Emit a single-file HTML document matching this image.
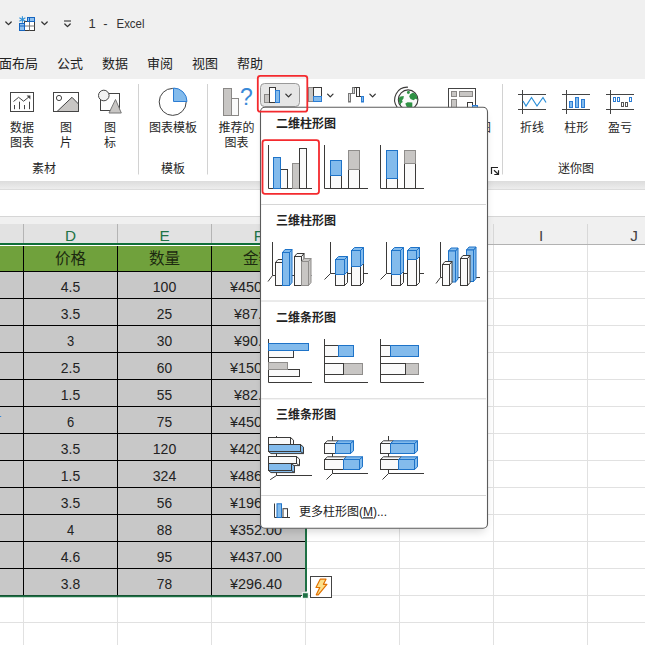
<!DOCTYPE html>
<html lang="zh-CN">
<head>
<meta charset="utf-8">
<title>1 - Excel</title>
<style>
html, body { margin: 0; padding: 0; background: #ffffff; }
body { width: 645px; height: 645px; overflow: hidden; }
svg { display: block; font-family: "Liberation Sans", "Noto Sans CJK SC", sans-serif; }
text { font-family: "Liberation Sans", "Noto Sans CJK SC", sans-serif; }
</style>
</head>
<body>
<svg width="645" height="645" viewBox="0 0 645 645" shape-rendering="auto">
<rect x="0" y="0" width="645" height="645" fill="#ffffff" stroke="none" stroke-width="1" rx="0" />
<rect x="0" y="0" width="645" height="79" fill="#f0f0f0" stroke="none" stroke-width="1" rx="0" />
<path d="M5.8 21.95 L8.5 24.650000000000002 L11.2 21.95" fill="none" stroke="#333" stroke-width="1.3" stroke-linecap="round" stroke-linejoin="round"/>
<rect x="24.5" y="21.5" width="10.0" height="9.0" fill="#ffffff" stroke="#3b3a39" stroke-width="1" rx="0" />
<line x1="29.5" y1="21.5" x2="29.5" y2="30.5" stroke="#777" stroke-width="1" />
<line x1="24.5" y1="26" x2="34.5" y2="26" stroke="#777" stroke-width="1" />
<rect x="27.5" y="17.5" width="7.0" height="4.0" fill="#8fc0ee" stroke="#1565c0" stroke-width="1" rx="0" />
<line x1="29.5" y1="17.5" x2="29.5" y2="21.5" stroke="#1565c0" stroke-width="1" />
<rect x="19.5" y="23.5" width="5.0" height="7.0" fill="#8fc0ee" stroke="#1565c0" stroke-width="1" rx="0" />
<line x1="19.5" y1="26" x2="24.5" y2="26" stroke="#1565c0" stroke-width="1" />
<line x1="19.5" y1="23" x2="19.5" y2="24" stroke="#1565c0" stroke-width="1" />
<line x1="22.4" y1="16.2" x2="22.4" y2="22.8" stroke="#2b8fd8" stroke-width="1.1" />
<line x1="19.4" y1="17.8" x2="25.4" y2="21.2" stroke="#2b8fd8" stroke-width="1.1" />
<line x1="19.4" y1="21.2" x2="25.4" y2="17.8" stroke="#2b8fd8" stroke-width="1.1" />
<path d="M41.8 21.95 L44.5 24.650000000000002 L47.2 21.95" fill="none" stroke="#333" stroke-width="1.3" stroke-linecap="round" stroke-linejoin="round"/>
<line x1="64" y1="21" x2="71" y2="21" stroke="#444" stroke-width="1.2" />
<path d="M64.8 23.95 L67.5 26.650000000000002 L70.2 23.95" fill="none" stroke="#333" stroke-width="1.3" stroke-linecap="round" stroke-linejoin="round"/>
<text x="88.5" y="28" font-size="13" text-anchor="start" fill="#333" font-weight="normal" >1</text>
<text x="105.5" y="28" font-size="13" text-anchor="middle" fill="#333" font-weight="normal" >-</text>
<text x="116.5" y="28" font-size="13" text-anchor="start" fill="#333" font-weight="normal" textLength="28" lengthAdjust="spacingAndGlyphs">Excel</text>
<text x="-1" y="67.8" font-size="13" text-anchor="start" fill="#222" font-weight="normal" >面布局</text>
<text x="70" y="67.8" font-size="13" text-anchor="middle" fill="#222" font-weight="normal" >公式</text>
<text x="115" y="67.8" font-size="13" text-anchor="middle" fill="#222" font-weight="normal" >数据</text>
<text x="160" y="67.8" font-size="13" text-anchor="middle" fill="#222" font-weight="normal" >审阅</text>
<text x="205" y="67.8" font-size="13" text-anchor="middle" fill="#222" font-weight="normal" >视图</text>
<text x="250" y="67.8" font-size="13" text-anchor="middle" fill="#222" font-weight="normal" >帮助</text>
<defs><linearGradient id="rs" x1="0" y1="0" x2="0" y2="1"><stop offset="0" stop-color="#dcdcdc"/><stop offset="1" stop-color="#efefef"/></linearGradient><linearGradient id="ps" x1="0" y1="0" x2="0" y2="1"><stop offset="0" stop-color="#000" stop-opacity="0.16"/><stop offset="1" stop-color="#000" stop-opacity="0"/></linearGradient><filter id="sh" x="-10%" y="-10%" width="120%" height="125%"><feGaussianBlur stdDeviation="5"/></filter></defs>
<rect x="0" y="79" width="645" height="102" fill="#ffffff" stroke="none" stroke-width="1" rx="0" />
<rect x="0" y="181" width="645" height="9" fill="url(#rs)" stroke="none" stroke-width="1" rx="0" />
<line x1="0" y1="189.5" x2="645" y2="189.5" stroke="#dcdcdc" stroke-width="1" />
<line x1="138.5" y1="84" x2="138.5" y2="174.5" stroke="#d2d2d2" stroke-width="1" />
<line x1="207.5" y1="84" x2="207.5" y2="174.5" stroke="#d2d2d2" stroke-width="1" />
<line x1="502.5" y1="84" x2="502.5" y2="174.5" stroke="#d2d2d2" stroke-width="1" />
<rect x="10.5" y="92.5" width="23.0" height="19.0" fill="#ffffff" stroke="#444" stroke-width="1" rx="0" />
<path d="M13.5 101.5 L18.6 97.3 L23.6 101.2 L29.3 96.6" fill="none" stroke="#444" stroke-width="1" />
<path d="M26.6 95.6 L30.4 95.6 L30.4 99.4 Z" fill="#444" stroke="none" stroke-width="1" />
<line x1="14.5" y1="105" x2="14.5" y2="109.2" stroke="#444" stroke-width="1" />
<line x1="19.5" y1="101.7" x2="19.5" y2="109.2" stroke="#444" stroke-width="1" />
<line x1="24.5" y1="105" x2="24.5" y2="109.2" stroke="#444" stroke-width="1" />
<line x1="29.5" y1="101.7" x2="29.5" y2="109.2" stroke="#444" stroke-width="1" />
<rect x="53.5" y="92.5" width="25.0" height="19.0" fill="#ffffff" stroke="#444" stroke-width="1" rx="0" />
<path d="M57 111.5 L72 97.3 L78.5 104 L78.5 111.5 Z" fill="#c8c6c4" stroke="#444" stroke-width="1" />
<circle cx="59" cy="98" r="2.6" fill="#fff" stroke="#444"/>
<rect x="100.5" y="93.5" width="19.0" height="17.0" fill="#ffffff" stroke="#444" stroke-width="1" rx="0" />
<circle cx="103.8" cy="95.5" r="5.3" fill="#f3f3f3" stroke="#444"/>
<path d="M115.5 99.5 L121.3 113 L109 113 Z" fill="#c8c6c4" stroke="#777" stroke-width="1" />
<text x="22" y="131.8" font-size="12" text-anchor="middle" fill="#262626" font-weight="normal" >数据</text>
<text x="22" y="146.8" font-size="12" text-anchor="middle" fill="#262626" font-weight="normal" >图表</text>
<text x="66" y="131.8" font-size="12" text-anchor="middle" fill="#262626" font-weight="normal" >图</text>
<text x="66" y="146.8" font-size="12" text-anchor="middle" fill="#262626" font-weight="normal" >片</text>
<text x="110" y="131.8" font-size="12" text-anchor="middle" fill="#262626" font-weight="normal" >图</text>
<text x="110" y="146.8" font-size="12" text-anchor="middle" fill="#262626" font-weight="normal" >标</text>
<text x="44" y="173" font-size="12" text-anchor="middle" fill="#262626" font-weight="normal" >素材</text>
<circle cx="172.7" cy="101.9" r="13.5" fill="#fff" stroke="#444"/>
<path d="M173.5 101.5 L173.5 88 A13.5 13.5 0 0 1 187 101.5 Z" fill="#83bbec" stroke="#2b7cd3" stroke-width="1" />
<text x="173" y="131.8" font-size="12" text-anchor="middle" fill="#262626" font-weight="normal" >图表模板</text>
<text x="173" y="173" font-size="12" text-anchor="middle" fill="#262626" font-weight="normal" >模板</text>
<rect x="223.5" y="88.5" width="8.0" height="27.0" fill="#c8c6c4" stroke="#8a8886" stroke-width="1" rx="0" />
<rect x="231.5" y="98.5" width="7.0" height="17.0" fill="#fafafa" stroke="#8a8886" stroke-width="1" rx="0" />
<text x="246.3" y="105.2" font-size="23" text-anchor="middle" fill="#3a8ad8" font-weight="normal" >?</text>
<text x="236.5" y="131.8" font-size="12" text-anchor="middle" fill="#262626" font-weight="normal" >推荐的</text>
<text x="236.5" y="146.8" font-size="12" text-anchor="middle" fill="#262626" font-weight="normal" >图表</text>
<rect x="260.5" y="83.5" width="39.0" height="23.0" fill="#e6e6e6" stroke="#9a9a9a" stroke-width="1" rx="4" />
<rect x="264.5" y="94.5" width="5.0" height="8.0" fill="#c8c6c4" stroke="#8a8886" stroke-width="1" rx="0" />
<rect x="269.5" y="87.5" width="6.0" height="15.0" fill="#fff" stroke="#3b3a39" stroke-width="1" rx="0" />
<rect x="275.5" y="90.5" width="4.0" height="12.0" fill="#83bbec" stroke="#2b7cd3" stroke-width="1" rx="0" />
<path d="M285.8 94.15 L288.5 96.85 L291.2 94.15" fill="none" stroke="#333" stroke-width="1.3" stroke-linecap="round" stroke-linejoin="round"/>
<rect x="308.5" y="87.5" width="5.0" height="14.0" fill="#c8c6c4" stroke="#8a8886" stroke-width="1" rx="0" />
<rect x="313.5" y="87.5" width="8.0" height="9.0" fill="#fafafa" stroke="#3b3a39" stroke-width="1" rx="0" />
<rect x="313.5" y="96.5" width="8.0" height="5.0" fill="#83bbec" stroke="#2b7cd3" stroke-width="1" rx="0" />
<path d="M327.6 94.15 L330.3 96.85 L333.0 94.15" fill="none" stroke="#333" stroke-width="1.3" stroke-linecap="round" stroke-linejoin="round"/>
<rect x="348.5" y="93.5" width="2.0" height="8.5" fill="#d6d6d6" stroke="#777" stroke-width="1" rx="0" />
<line x1="350.5" y1="93.5" x2="352.5" y2="93.5" stroke="#777" stroke-width="1" />
<rect x="352.5" y="87.5" width="2.0" height="6.0" fill="#d6d6d6" stroke="#777" stroke-width="1" rx="0" />
<line x1="354.5" y1="87.5" x2="356.5" y2="87.5" stroke="#3b3a39" stroke-width="1" />
<rect x="356.5" y="87.5" width="3.0" height="9.0" fill="#fafafa" stroke="#3b3a39" stroke-width="1" rx="0" />
<line x1="359.5" y1="96.5" x2="361.5" y2="96.5" stroke="#3b3a39" stroke-width="1" />
<rect x="361.5" y="96.5" width="2.0" height="5.5" fill="#83bbec" stroke="#2b7cd3" stroke-width="1" rx="0" />
<path d="M369.90000000000003 94.15 L372.6 96.85 L375.3 94.15" fill="none" stroke="#333" stroke-width="1.3" stroke-linecap="round" stroke-linejoin="round"/>
<clipPath id="gc"><circle cx="408.1" cy="99.7" r="9.4"/></clipPath>
<circle cx="408.1" cy="99.7" r="9.8" fill="#fafafa" stroke="#3b3a39" stroke-width="1.1"/>
<path d="M408 87.2 A12.6 12.6 0 0 0 397.2 107.3" fill="none" stroke="#3b3a39" stroke-width="1.1" />
<g clip-path="url(#gc)">
<path d="M407.5 91 L409.5 91 L410 93 L408 94.3 L406.8 92.8 Z" fill="#2f9245" stroke="none" stroke-width="1" />
<path d="M410 94.5 L412.5 92.8 L415.5 93.5 L418 97 L418 100 L415.5 98.8 L413.5 100.2 L410.5 99 L409.2 96.5 Z" fill="#2f9245" stroke="none" stroke-width="1" />
<path d="M398 98.5 L400.5 96.5 L403.8 96 L403.5 98.5 L402 100.5 L402.8 102 L401 103.2 L400.8 105 L398.5 104 Z" fill="#2f9245" stroke="none" stroke-width="1" />
<path d="M405.3 103.5 L407.5 102.3 L412.3 102.5 L412.3 107.5 L409 109.5 L406.5 106.5 Z" fill="#2f9245" stroke="none" stroke-width="1" />
</g>
<rect x="448.5" y="88.5" width="27.0" height="23.5" fill="#fff" stroke="#444" stroke-width="1" rx="0" />
<rect x="451.5" y="91.5" width="5.0" height="5.0" fill="#c8c6c4" stroke="#8a8886" stroke-width="1" rx="0" />
<rect x="459.5" y="91.5" width="13.0" height="5.0" fill="#c8c6c4" stroke="#8a8886" stroke-width="1" rx="0" />
<rect x="451.5" y="99.5" width="5.0" height="10.5" fill="#c8c6c4" stroke="#8a8886" stroke-width="1" rx="0" />
<rect x="467.5" y="102.5" width="5.0" height="7.5" fill="#fff" stroke="#3b3a39" stroke-width="1" rx="0" />
<rect x="472.5" y="105.5" width="5.0" height="4.5" fill="#83bbec" stroke="#2b7cd3" stroke-width="1" rx="0" />
<text x="485" y="131.8" font-size="12" text-anchor="middle" fill="#262626" font-weight="normal" >图</text>
<path d="M491.5 174 L491.5 167.5 L498 167.5 M494 170.3 L498.5 174.5 M498.5 170.3 L498.5 174.5 L494.3 174.5" fill="none" stroke="#222" stroke-width="1.2" />
<line x1="518" y1="94.5" x2="546" y2="94.5" stroke="#444" stroke-width="1" />
<line x1="518" y1="109.5" x2="546" y2="109.5" stroke="#444" stroke-width="1" />
<line x1="522.5" y1="90" x2="522.5" y2="114" stroke="#444" stroke-width="1" />
<line x1="562" y1="94.5" x2="590" y2="94.5" stroke="#444" stroke-width="1" />
<line x1="562" y1="109.5" x2="590" y2="109.5" stroke="#444" stroke-width="1" />
<line x1="566.5" y1="90" x2="566.5" y2="114" stroke="#444" stroke-width="1" />
<line x1="606" y1="94.5" x2="634" y2="94.5" stroke="#444" stroke-width="1" />
<line x1="606" y1="109.5" x2="634" y2="109.5" stroke="#444" stroke-width="1" />
<line x1="610.5" y1="90" x2="610.5" y2="114" stroke="#444" stroke-width="1" />
<path d="M523 101 L526 106 L531.5 97.5 L537 106 L543 97.5 L546 102.5" fill="none" stroke="#2b8fd8" stroke-width="1.2" />
<rect x="569.5" y="101.5" width="3.0" height="6.0" fill="#83bbec" stroke="#2b7cd3" stroke-width="1" rx="0" />
<rect x="575.5" y="97.5" width="3.0" height="10.0" fill="#83bbec" stroke="#2b7cd3" stroke-width="1" rx="0" />
<rect x="581.5" y="99.5" width="3.0" height="8.0" fill="#83bbec" stroke="#2b7cd3" stroke-width="1" rx="0" />
<rect x="613.5" y="97.5" width="2.0" height="4.0" fill="#fff" stroke="#2b7cd3" stroke-width="1" rx="0" />
<rect x="617.5" y="97.5" width="2.0" height="4.0" fill="#fff" stroke="#2b7cd3" stroke-width="1" rx="0" />
<rect x="629.5" y="97.5" width="2.0" height="4.0" fill="#fff" stroke="#2b7cd3" stroke-width="1" rx="0" />
<rect x="621.5" y="102.5" width="2.0" height="4.0" fill="#fff" stroke="#555" stroke-width="1" rx="0" />
<rect x="625.5" y="102.5" width="2.0" height="4.0" fill="#fff" stroke="#555" stroke-width="1" rx="0" />
<text x="532" y="131.8" font-size="12" text-anchor="middle" fill="#262626" font-weight="normal" >折线</text>
<text x="576.3" y="131.8" font-size="12" text-anchor="middle" fill="#262626" font-weight="normal" >柱形</text>
<text x="620" y="131.8" font-size="12" text-anchor="middle" fill="#262626" font-weight="normal" >盈亏</text>
<text x="576" y="173" font-size="12" text-anchor="middle" fill="#262626" font-weight="normal" >迷你图</text>
<rect x="0" y="190" width="645" height="27" fill="#ffffff" stroke="none" stroke-width="1" rx="0" />
<rect x="0" y="217" width="645" height="28" fill="#f0f0f0" stroke="none" stroke-width="1" rx="0" />
<line x1="0" y1="216.5" x2="645" y2="216.5" stroke="#d6d6d6" stroke-width="1" />
<rect x="0" y="224" width="306" height="19" fill="#e2e2e2" stroke="none" stroke-width="1" rx="0" />
<line x1="23.5" y1="224" x2="23.5" y2="243" stroke="#b4b4b4" stroke-width="1" />
<line x1="117.5" y1="224" x2="117.5" y2="243" stroke="#b4b4b4" stroke-width="1" />
<line x1="211.5" y1="224" x2="211.5" y2="243" stroke="#b4b4b4" stroke-width="1" />
<line x1="305.5" y1="224" x2="305.5" y2="244" stroke="#d8d8d8" stroke-width="1" />
<line x1="399.5" y1="224" x2="399.5" y2="244" stroke="#d8d8d8" stroke-width="1" />
<line x1="493.5" y1="224" x2="493.5" y2="244" stroke="#d8d8d8" stroke-width="1" />
<line x1="587.5" y1="224" x2="587.5" y2="244" stroke="#d8d8d8" stroke-width="1" />
<text x="70.5" y="240.9" font-size="15.3" text-anchor="middle" fill="#217346" font-weight="normal" >D</text>
<text x="164.5" y="240.9" font-size="15.3" text-anchor="middle" fill="#217346" font-weight="normal" >E</text>
<text x="258.5" y="240.9" font-size="15.3" text-anchor="middle" fill="#217346" font-weight="normal" >F</text>
<text x="541" y="240.9" font-size="15.3" text-anchor="middle" fill="#444" font-weight="normal" >I</text>
<text x="634.2" y="240.9" font-size="15.3" text-anchor="middle" fill="#444" font-weight="normal" >J</text>
<line x1="0" y1="271.5" x2="645" y2="271.5" stroke="#e1e1e1" stroke-width="1" />
<line x1="0" y1="298.5" x2="645" y2="298.5" stroke="#e1e1e1" stroke-width="1" />
<line x1="0" y1="325.5" x2="645" y2="325.5" stroke="#e1e1e1" stroke-width="1" />
<line x1="0" y1="352.5" x2="645" y2="352.5" stroke="#e1e1e1" stroke-width="1" />
<line x1="0" y1="379.5" x2="645" y2="379.5" stroke="#e1e1e1" stroke-width="1" />
<line x1="0" y1="406.5" x2="645" y2="406.5" stroke="#e1e1e1" stroke-width="1" />
<line x1="0" y1="433.5" x2="645" y2="433.5" stroke="#e1e1e1" stroke-width="1" />
<line x1="0" y1="460.5" x2="645" y2="460.5" stroke="#e1e1e1" stroke-width="1" />
<line x1="0" y1="487.5" x2="645" y2="487.5" stroke="#e1e1e1" stroke-width="1" />
<line x1="0" y1="514.5" x2="645" y2="514.5" stroke="#e1e1e1" stroke-width="1" />
<line x1="0" y1="541.5" x2="645" y2="541.5" stroke="#e1e1e1" stroke-width="1" />
<line x1="0" y1="568.5" x2="645" y2="568.5" stroke="#e1e1e1" stroke-width="1" />
<line x1="0" y1="595.5" x2="645" y2="595.5" stroke="#e1e1e1" stroke-width="1" />
<line x1="0" y1="622.5" x2="645" y2="622.5" stroke="#e1e1e1" stroke-width="1" />
<line x1="0" y1="649.5" x2="645" y2="649.5" stroke="#e1e1e1" stroke-width="1" />
<line x1="23.5" y1="245" x2="23.5" y2="645" stroke="#e1e1e1" stroke-width="1" />
<line x1="117.5" y1="245" x2="117.5" y2="645" stroke="#e1e1e1" stroke-width="1" />
<line x1="211.5" y1="245" x2="211.5" y2="645" stroke="#e1e1e1" stroke-width="1" />
<line x1="305.5" y1="245" x2="305.5" y2="645" stroke="#e1e1e1" stroke-width="1" />
<line x1="399.5" y1="245" x2="399.5" y2="645" stroke="#e1e1e1" stroke-width="1" />
<line x1="493.5" y1="245" x2="493.5" y2="645" stroke="#e1e1e1" stroke-width="1" />
<line x1="587.5" y1="245" x2="587.5" y2="645" stroke="#e1e1e1" stroke-width="1" />
<line x1="306" y1="244.5" x2="645" y2="244.5" stroke="#b2b2b2" stroke-width="1" />
<rect x="0" y="245" width="305.5" height="1" fill="#ffffff" stroke="none" stroke-width="1" rx="0" />
<rect x="0" y="246" width="305.5" height="25.5" fill="#70a13c" stroke="none" stroke-width="1" rx="0" />
<rect x="0" y="271.5" width="305.5" height="324.0" fill="#c8c8c8" stroke="none" stroke-width="1" rx="0" />
<line x1="0" y1="271.5" x2="305.5" y2="271.5" stroke="#000" stroke-width="1" />
<line x1="0" y1="298.5" x2="305.5" y2="298.5" stroke="#000" stroke-width="1" />
<line x1="0" y1="325.5" x2="305.5" y2="325.5" stroke="#000" stroke-width="1" />
<line x1="0" y1="352.5" x2="305.5" y2="352.5" stroke="#000" stroke-width="1" />
<line x1="0" y1="379.5" x2="305.5" y2="379.5" stroke="#000" stroke-width="1" />
<line x1="0" y1="406.5" x2="305.5" y2="406.5" stroke="#000" stroke-width="1" />
<line x1="0" y1="433.5" x2="305.5" y2="433.5" stroke="#000" stroke-width="1" />
<line x1="0" y1="460.5" x2="305.5" y2="460.5" stroke="#000" stroke-width="1" />
<line x1="0" y1="487.5" x2="305.5" y2="487.5" stroke="#000" stroke-width="1" />
<line x1="0" y1="514.5" x2="305.5" y2="514.5" stroke="#000" stroke-width="1" />
<line x1="0" y1="541.5" x2="305.5" y2="541.5" stroke="#000" stroke-width="1" />
<line x1="0" y1="568.5" x2="305.5" y2="568.5" stroke="#000" stroke-width="1" />
<line x1="0" y1="595.5" x2="305.5" y2="595.5" stroke="#000" stroke-width="1" />
<line x1="23.5" y1="246" x2="23.5" y2="595.5" stroke="#000" stroke-width="1" />
<line x1="117.5" y1="246" x2="117.5" y2="595.5" stroke="#000" stroke-width="1" />
<line x1="211.5" y1="246" x2="211.5" y2="595.5" stroke="#000" stroke-width="1" />
<line x1="0" y1="244" x2="307" y2="244" stroke="#0f6e38" stroke-width="2" />
<line x1="306" y1="243" x2="306" y2="591.5" stroke="#1e7145" stroke-width="2" />
<line x1="0" y1="596.2" x2="301" y2="596.2" stroke="#1e7145" stroke-width="2" />
<rect x="302.3" y="592.7" width="6.0" height="5.6" fill="#1e7145" stroke="#fff" stroke-width="1" rx="0" />
<text x="70.5" y="264.2" font-size="15.6" text-anchor="middle" fill="#1c2a10" font-weight="normal" >价格</text>
<text x="164.5" y="264.2" font-size="15.6" text-anchor="middle" fill="#1c2a10" font-weight="normal" >数量</text>
<text x="258.5" y="264.2" font-size="15.6" text-anchor="middle" fill="#1c2a10" font-weight="normal" >金额</text>
<text x="70.5" y="291.7" font-size="15.2" text-anchor="middle" fill="#222" font-weight="normal" textLength="19.4" lengthAdjust="spacingAndGlyphs">4.5</text>
<text x="164.5" y="291.7" font-size="15.2" text-anchor="middle" fill="#222" font-weight="normal" textLength="23.5" lengthAdjust="spacingAndGlyphs">100</text>
<text x="255.9" y="291.7" font-size="15.2" text-anchor="middle" fill="#222" font-weight="normal" textLength="52.0" lengthAdjust="spacingAndGlyphs">¥450.00</text>
<text x="70.5" y="318.7" font-size="15.2" text-anchor="middle" fill="#222" font-weight="normal" textLength="19.4" lengthAdjust="spacingAndGlyphs">3.5</text>
<text x="164.5" y="318.7" font-size="15.2" text-anchor="middle" fill="#222" font-weight="normal" textLength="15.3" lengthAdjust="spacingAndGlyphs">25</text>
<text x="255.9" y="318.7" font-size="15.2" text-anchor="middle" fill="#222" font-weight="normal" textLength="43.9" lengthAdjust="spacingAndGlyphs">¥87.50</text>
<text x="70.5" y="345.7" font-size="15.2" text-anchor="middle" fill="#222" font-weight="normal" textLength="7.2" lengthAdjust="spacingAndGlyphs">3</text>
<text x="164.5" y="345.7" font-size="15.2" text-anchor="middle" fill="#222" font-weight="normal" textLength="15.3" lengthAdjust="spacingAndGlyphs">30</text>
<text x="255.9" y="345.7" font-size="15.2" text-anchor="middle" fill="#222" font-weight="normal" textLength="43.9" lengthAdjust="spacingAndGlyphs">¥90.00</text>
<text x="70.5" y="372.7" font-size="15.2" text-anchor="middle" fill="#222" font-weight="normal" textLength="19.4" lengthAdjust="spacingAndGlyphs">2.5</text>
<text x="164.5" y="372.7" font-size="15.2" text-anchor="middle" fill="#222" font-weight="normal" textLength="15.3" lengthAdjust="spacingAndGlyphs">60</text>
<text x="255.9" y="372.7" font-size="15.2" text-anchor="middle" fill="#222" font-weight="normal" textLength="52.0" lengthAdjust="spacingAndGlyphs">¥150.00</text>
<text x="70.5" y="399.7" font-size="15.2" text-anchor="middle" fill="#222" font-weight="normal" textLength="19.4" lengthAdjust="spacingAndGlyphs">1.5</text>
<text x="164.5" y="399.7" font-size="15.2" text-anchor="middle" fill="#222" font-weight="normal" textLength="15.3" lengthAdjust="spacingAndGlyphs">55</text>
<text x="255.9" y="399.7" font-size="15.2" text-anchor="middle" fill="#222" font-weight="normal" textLength="43.9" lengthAdjust="spacingAndGlyphs">¥82.50</text>
<text x="70.5" y="426.7" font-size="15.2" text-anchor="middle" fill="#222" font-weight="normal" textLength="7.2" lengthAdjust="spacingAndGlyphs">6</text>
<text x="164.5" y="426.7" font-size="15.2" text-anchor="middle" fill="#222" font-weight="normal" textLength="15.3" lengthAdjust="spacingAndGlyphs">75</text>
<text x="255.9" y="426.7" font-size="15.2" text-anchor="middle" fill="#222" font-weight="normal" textLength="52.0" lengthAdjust="spacingAndGlyphs">¥450.00</text>
<text x="70.5" y="453.7" font-size="15.2" text-anchor="middle" fill="#222" font-weight="normal" textLength="19.4" lengthAdjust="spacingAndGlyphs">3.5</text>
<text x="164.5" y="453.7" font-size="15.2" text-anchor="middle" fill="#222" font-weight="normal" textLength="23.5" lengthAdjust="spacingAndGlyphs">120</text>
<text x="255.9" y="453.7" font-size="15.2" text-anchor="middle" fill="#222" font-weight="normal" textLength="52.0" lengthAdjust="spacingAndGlyphs">¥420.00</text>
<text x="70.5" y="480.7" font-size="15.2" text-anchor="middle" fill="#222" font-weight="normal" textLength="19.4" lengthAdjust="spacingAndGlyphs">1.5</text>
<text x="164.5" y="480.7" font-size="15.2" text-anchor="middle" fill="#222" font-weight="normal" textLength="23.5" lengthAdjust="spacingAndGlyphs">324</text>
<text x="255.9" y="480.7" font-size="15.2" text-anchor="middle" fill="#222" font-weight="normal" textLength="52.0" lengthAdjust="spacingAndGlyphs">¥486.00</text>
<text x="70.5" y="507.7" font-size="15.2" text-anchor="middle" fill="#222" font-weight="normal" textLength="19.4" lengthAdjust="spacingAndGlyphs">3.5</text>
<text x="164.5" y="507.7" font-size="15.2" text-anchor="middle" fill="#222" font-weight="normal" textLength="15.3" lengthAdjust="spacingAndGlyphs">56</text>
<text x="255.9" y="507.7" font-size="15.2" text-anchor="middle" fill="#222" font-weight="normal" textLength="52.0" lengthAdjust="spacingAndGlyphs">¥196.00</text>
<text x="70.5" y="534.7" font-size="15.2" text-anchor="middle" fill="#222" font-weight="normal" textLength="7.2" lengthAdjust="spacingAndGlyphs">4</text>
<text x="164.5" y="534.7" font-size="15.2" text-anchor="middle" fill="#222" font-weight="normal" textLength="15.3" lengthAdjust="spacingAndGlyphs">88</text>
<text x="255.9" y="534.7" font-size="15.2" text-anchor="middle" fill="#222" font-weight="normal" textLength="52.0" lengthAdjust="spacingAndGlyphs">¥352.00</text>
<text x="70.5" y="561.7" font-size="15.2" text-anchor="middle" fill="#222" font-weight="normal" textLength="19.4" lengthAdjust="spacingAndGlyphs">4.6</text>
<text x="164.5" y="561.7" font-size="15.2" text-anchor="middle" fill="#222" font-weight="normal" textLength="15.3" lengthAdjust="spacingAndGlyphs">95</text>
<text x="255.9" y="561.7" font-size="15.2" text-anchor="middle" fill="#222" font-weight="normal" textLength="52.0" lengthAdjust="spacingAndGlyphs">¥437.00</text>
<text x="70.5" y="588.7" font-size="15.2" text-anchor="middle" fill="#222" font-weight="normal" textLength="19.4" lengthAdjust="spacingAndGlyphs">3.8</text>
<text x="164.5" y="588.7" font-size="15.2" text-anchor="middle" fill="#222" font-weight="normal" textLength="15.3" lengthAdjust="spacingAndGlyphs">78</text>
<text x="255.9" y="588.7" font-size="15.2" text-anchor="middle" fill="#222" font-weight="normal" textLength="52.0" lengthAdjust="spacingAndGlyphs">¥296.40</text>
<line x1="0" y1="416.5" x2="1.2" y2="416.5" stroke="#3a8ad8" stroke-width="1" />
<rect x="310.5" y="576.5" width="21.0" height="21.0" fill="#fff" stroke="#444" stroke-width="1" rx="0" />
<path d="M320.2 579.2 L326 579.2 L323.4 584.3 L326.9 584.3 L318.2 594.8 L316.3 594.8 L319.8 587.5 L316 587.5 Z" fill="#fbe08a" stroke="#e27100" stroke-width="1.2" stroke-linejoin="round"/>
<rect x="264.5" y="115.2" width="220.5" height="416.00000000000006" rx="4" fill="#000" opacity="0.17" filter="url(#sh)"/>
<rect x="260.5" y="107.2" width="227.0" height="421.0" fill="#ffffff" stroke="#5c5c5c" stroke-width="1.1" rx="4.5" />
<rect x="257.8" y="75.8" width="49.5" height="35.9" fill="none" stroke="#f42a2e" stroke-width="1.8" rx="2.5" />
<line x1="261" y1="204.5" x2="486" y2="204.5" stroke="#d6d6d6" stroke-width="1" />
<line x1="261" y1="301" x2="486" y2="301" stroke="#d6d6d6" stroke-width="1" />
<line x1="261" y1="398.8" x2="486" y2="398.8" stroke="#d6d6d6" stroke-width="1" />
<line x1="261" y1="495.5" x2="486" y2="495.5" stroke="#d6d6d6" stroke-width="1" />
<text x="276" y="127.8" font-size="12" text-anchor="start" fill="#222" font-weight="bold" >二维柱形图</text>
<text x="276" y="224.8" font-size="12" text-anchor="start" fill="#222" font-weight="bold" >三维柱形图</text>
<text x="276" y="321.8" font-size="12" text-anchor="start" fill="#222" font-weight="bold" >二维条形图</text>
<text x="276" y="418.8" font-size="12" text-anchor="start" fill="#222" font-weight="bold" >三维条形图</text>
<text x="299" y="516.3" font-size="12" text-anchor="start" fill="#222" font-weight="normal" >更多柱形图(<tspan text-decoration="underline">M</tspan>)...</text>
<rect x="262.5" y="140.2" width="56.5" height="53.6" fill="none" stroke="#f42a2e" stroke-width="1.8" rx="2.5" />
<path d="M268.5 145 L268.5 188.5 L312.0 188.5" fill="none" stroke="#3b3a39" stroke-width="1" />
<rect x="280.5" y="169.5" width="7.0" height="19.0" fill="#fafafa" stroke="#3b3a39" stroke-width="1" rx="0" />
<rect x="273.5" y="157.5" width="7.0" height="31.0" fill="#83bbec" stroke="#1e73c8" stroke-width="1" rx="0" />
<rect x="292.5" y="163.5" width="7.0" height="25.0" fill="#c8c6c4" stroke="#8f8d8b" stroke-width="1" rx="0" />
<rect x="299.5" y="148.5" width="7.0" height="40.0" fill="#fafafa" stroke="#3b3a39" stroke-width="1" rx="0" />
<path d="M324.5 145 L324.5 188.5 L368.0 188.5" fill="none" stroke="#3b3a39" stroke-width="1" />
<rect x="330.5" y="175.5" width="11.0" height="13.0" fill="#fafafa" stroke="#3b3a39" stroke-width="1" rx="0" />
<rect x="330.5" y="160.5" width="11.0" height="15.0" fill="#83bbec" stroke="#1e73c8" stroke-width="1" rx="0" />
<rect x="348.5" y="169.5" width="11.0" height="19.0" fill="#fafafa" stroke="#3b3a39" stroke-width="1" rx="0" />
<rect x="348.5" y="150.5" width="11.0" height="19.0" fill="#c8c6c4" stroke="#8f8d8b" stroke-width="1" rx="0" />
<path d="M380.5 145 L380.5 188.5 L424.0 188.5" fill="none" stroke="#3b3a39" stroke-width="1" />
<rect x="386.5" y="178.5" width="11.0" height="10.0" fill="#fafafa" stroke="#3b3a39" stroke-width="1" rx="0" />
<rect x="386.5" y="150.5" width="11.0" height="28.0" fill="#83bbec" stroke="#1e73c8" stroke-width="1" rx="0" />
<rect x="404.5" y="163.5" width="11.0" height="25.0" fill="#fafafa" stroke="#3b3a39" stroke-width="1" rx="0" />
<rect x="404.5" y="150.5" width="11.0" height="13.0" fill="#c8c6c4" stroke="#8f8d8b" stroke-width="1" rx="0" />
<path d="M272.5 242 L272.5 275.5 L311.5 275.5 M272.5 275.5 L268.0 281.5" fill="none" stroke="#3b3a39" stroke-width="1" />
<path d="M282.5 262.5 L285.0 259.5 L285.0 282.5 L282.5 285.5 Z" fill="#fafafa" stroke="#3b3a39" stroke-width="1" stroke-linejoin="round"/>
<path d="M275.5 262.5 L278.0 259.5 L285.0 259.5 L282.5 262.5 Z" fill="#fafafa" stroke="#3b3a39" stroke-width="1" stroke-linejoin="round"/>
<rect x="275.5" y="262.5" width="7.0" height="23.0" fill="#fafafa" stroke="#3b3a39" stroke-width="1" rx="0" />
<path d="M289.5 252.5 L292.0 249.5 L292.0 282.5 L289.5 285.5 Z" fill="#83bbec" stroke="#1e73c8" stroke-width="1" stroke-linejoin="round"/>
<path d="M282.5 252.5 L285.0 249.5 L292.0 249.5 L289.5 252.5 Z" fill="#83bbec" stroke="#1e73c8" stroke-width="1" stroke-linejoin="round"/>
<rect x="282.5" y="252.5" width="7.0" height="33.0" fill="#83bbec" stroke="#1e73c8" stroke-width="1" rx="0" />
<path d="M301.5 256.5 L304.0 253.5 L304.0 282.5 L301.5 285.5 Z" fill="#fafafa" stroke="#3b3a39" stroke-width="1" stroke-linejoin="round"/>
<path d="M294.5 256.5 L297.0 253.5 L304.0 253.5 L301.5 256.5 Z" fill="#fafafa" stroke="#3b3a39" stroke-width="1" stroke-linejoin="round"/>
<rect x="294.5" y="256.5" width="7.0" height="29.0" fill="#fafafa" stroke="#3b3a39" stroke-width="1" rx="0" />
<path d="M308.5 261.5 L311.0 258.5 L311.0 282.5 L308.5 285.5 Z" fill="#c8c6c4" stroke="#8f8d8b" stroke-width="1" stroke-linejoin="round"/>
<path d="M301.5 261.5 L304.0 258.5 L311.0 258.5 L308.5 261.5 Z" fill="#c8c6c4" stroke="#8f8d8b" stroke-width="1" stroke-linejoin="round"/>
<rect x="301.5" y="261.5" width="7.0" height="24.0" fill="#c8c6c4" stroke="#8f8d8b" stroke-width="1" rx="0" />
<path d="M330.5 242 L330.5 273.5 L368 273.5 M330.5 273.5 L324.5 279.5" fill="none" stroke="#3b3a39" stroke-width="1" />
<path d="M344.5 274.5 L347.5 271.5 L347.5 282.5 L344.5 285.5 Z" fill="#fafafa" stroke="#3b3a39" stroke-width="1" stroke-linejoin="round"/>
<rect x="335.5" y="274.5" width="9.0" height="11.0" fill="#fafafa" stroke="#3b3a39" stroke-width="1" rx="0" />
<path d="M344.5 259.5 L347.5 256.5 L347.5 271.5 L344.5 274.5 Z" fill="#83bbec" stroke="#1e73c8" stroke-width="1" stroke-linejoin="round"/>
<path d="M335.5 259.5 L338.5 256.5 L347.5 256.5 L344.5 259.5 Z" fill="#83bbec" stroke="#1e73c8" stroke-width="1" stroke-linejoin="round"/>
<rect x="335.5" y="259.5" width="9.0" height="15.0" fill="#83bbec" stroke="#1e73c8" stroke-width="1" rx="0" />
<path d="M360.5 266.5 L363.5 263.5 L363.5 282.5 L360.5 285.5 Z" fill="#fafafa" stroke="#3b3a39" stroke-width="1" stroke-linejoin="round"/>
<rect x="351.5" y="266.5" width="9.0" height="19.0" fill="#fafafa" stroke="#3b3a39" stroke-width="1" rx="0" />
<path d="M360.5 250.5 L363.5 247.5 L363.5 263.5 L360.5 266.5 Z" fill="#83bbec" stroke="#1e73c8" stroke-width="1" stroke-linejoin="round"/>
<path d="M351.5 250.5 L354.5 247.5 L363.5 247.5 L360.5 250.5 Z" fill="#83bbec" stroke="#1e73c8" stroke-width="1" stroke-linejoin="round"/>
<rect x="351.5" y="250.5" width="9.0" height="16.0" fill="#83bbec" stroke="#1e73c8" stroke-width="1" rx="0" />
<path d="M386.5 242 L386.5 273.5 L424 273.5 M386.5 273.5 L380.5 279.5" fill="none" stroke="#3b3a39" stroke-width="1" />
<path d="M400.5 274.5 L403.5 271.5 L403.5 282.5 L400.5 285.5 Z" fill="#fafafa" stroke="#3b3a39" stroke-width="1" stroke-linejoin="round"/>
<rect x="391.5" y="274.5" width="9.0" height="11.0" fill="#fafafa" stroke="#3b3a39" stroke-width="1" rx="0" />
<path d="M400.5 250.5 L403.5 247.5 L403.5 271.5 L400.5 274.5 Z" fill="#83bbec" stroke="#1e73c8" stroke-width="1" stroke-linejoin="round"/>
<path d="M391.5 250.5 L394.5 247.5 L403.5 247.5 L400.5 250.5 Z" fill="#83bbec" stroke="#1e73c8" stroke-width="1" stroke-linejoin="round"/>
<rect x="391.5" y="250.5" width="9.0" height="24.0" fill="#83bbec" stroke="#1e73c8" stroke-width="1" rx="0" />
<path d="M416.5 259.5 L419.5 256.5 L419.5 282.5 L416.5 285.5 Z" fill="#fafafa" stroke="#3b3a39" stroke-width="1" stroke-linejoin="round"/>
<rect x="407.5" y="259.5" width="9.0" height="26.0" fill="#fafafa" stroke="#3b3a39" stroke-width="1" rx="0" />
<path d="M416.5 250.5 L419.5 247.5 L419.5 256.5 L416.5 259.5 Z" fill="#83bbec" stroke="#1e73c8" stroke-width="1" stroke-linejoin="round"/>
<path d="M407.5 250.5 L410.5 247.5 L419.5 247.5 L416.5 250.5 Z" fill="#83bbec" stroke="#1e73c8" stroke-width="1" stroke-linejoin="round"/>
<rect x="407.5" y="250.5" width="9.0" height="9.0" fill="#83bbec" stroke="#1e73c8" stroke-width="1" rx="0" />
<path d="M440.5 242 L440.5 277.5 L480 277.5 M440.5 277.5 L436.0 283.5" fill="none" stroke="#3b3a39" stroke-width="1" />
<path d="M455.5 251 L458.0 248 L458.0 279 L455.5 282 Z" fill="#83bbec" stroke="#1e73c8" stroke-width="1" stroke-linejoin="round"/>
<path d="M448.5 251 L451.0 248 L458.0 248 L455.5 251 Z" fill="#83bbec" stroke="#1e73c8" stroke-width="1" stroke-linejoin="round"/>
<rect x="448.5" y="251" width="7.0" height="31" fill="#83bbec" stroke="#1e73c8" stroke-width="1" rx="0" />
<path d="M473.5 250 L476.0 247 L476.0 278.5 L473.5 281.5 Z" fill="#83bbec" stroke="#1e73c8" stroke-width="1" stroke-linejoin="round"/>
<path d="M466.5 250 L469.0 247 L476.0 247 L473.5 250 Z" fill="#83bbec" stroke="#1e73c8" stroke-width="1" stroke-linejoin="round"/>
<rect x="466.5" y="250" width="7.0" height="31.5" fill="#83bbec" stroke="#1e73c8" stroke-width="1" rx="0" />
<path d="M449.5 264.5 L452.0 261.5 L452.0 282.5 L449.5 285.5 Z" fill="#fafafa" stroke="#3b3a39" stroke-width="1" stroke-linejoin="round"/>
<path d="M442.5 264.5 L445.0 261.5 L452.0 261.5 L449.5 264.5 Z" fill="#fafafa" stroke="#3b3a39" stroke-width="1" stroke-linejoin="round"/>
<rect x="442.5" y="264.5" width="7.0" height="21.0" fill="#fafafa" stroke="#3b3a39" stroke-width="1" rx="0" />
<path d="M467.5 258.5 L470.0 255.5 L470.0 282.5 L467.5 285.5 Z" fill="#fafafa" stroke="#3b3a39" stroke-width="1" stroke-linejoin="round"/>
<path d="M460.5 258.5 L463.0 255.5 L470.0 255.5 L467.5 258.5 Z" fill="#fafafa" stroke="#3b3a39" stroke-width="1" stroke-linejoin="round"/>
<rect x="460.5" y="258.5" width="7.0" height="27.0" fill="#fafafa" stroke="#3b3a39" stroke-width="1" rx="0" />
<path d="M268.5 339 L268.5 382.5 L312.0 382.5" fill="none" stroke="#3b3a39" stroke-width="1" />
<rect x="268.5" y="350.5" width="25.0" height="7.0" fill="#fafafa" stroke="#3b3a39" stroke-width="1" rx="0" />
<rect x="268.5" y="343.5" width="40.0" height="7.0" fill="#83bbec" stroke="#1e73c8" stroke-width="1" rx="0" />
<rect x="268.5" y="369.5" width="31.0" height="7.0" fill="#fafafa" stroke="#3b3a39" stroke-width="1" rx="0" />
<rect x="268.5" y="362.5" width="19.0" height="7.0" fill="#c8c6c4" stroke="#8f8d8b" stroke-width="1" rx="0" />
<path d="M324.5 339 L324.5 382.5 L368.0 382.5" fill="none" stroke="#3b3a39" stroke-width="1" />
<rect x="324.5" y="345.5" width="14.0" height="11.0" fill="#fafafa" stroke="#3b3a39" stroke-width="1" rx="0" />
<rect x="338.5" y="345.5" width="15.0" height="11.0" fill="#83bbec" stroke="#1e73c8" stroke-width="1" rx="0" />
<rect x="343.5" y="363.5" width="19.0" height="11.0" fill="#c8c6c4" stroke="#8f8d8b" stroke-width="1" rx="0" />
<rect x="324.5" y="363.5" width="19.0" height="11.0" fill="#fafafa" stroke="#3b3a39" stroke-width="1" rx="0" />
<path d="M380.5 339 L380.5 382.5 L424.0 382.5" fill="none" stroke="#3b3a39" stroke-width="1" />
<rect x="380.5" y="345.5" width="10.0" height="11.0" fill="#fafafa" stroke="#3b3a39" stroke-width="1" rx="0" />
<rect x="390.5" y="345.5" width="28.0" height="11.0" fill="#83bbec" stroke="#1e73c8" stroke-width="1" rx="0" />
<rect x="405.5" y="363.5" width="13.0" height="11.0" fill="#c8c6c4" stroke="#8f8d8b" stroke-width="1" rx="0" />
<rect x="380.5" y="363.5" width="25.0" height="11.0" fill="#fafafa" stroke="#3b3a39" stroke-width="1" rx="0" />
<path d="M276.5 436 L276.5 475.5 L312 475.5 M276.5 475.5 L270.2 479.7" fill="none" stroke="#3b3a39" stroke-width="1" />
<path d="M268.5 444.5 L271.0 446.6 L293.5 446.6 L293.5 440.1 L290.5 437.5 Z" fill="#fafafa" stroke="#3b3a39" stroke-width="1" stroke-linejoin="round"/>
<path d="M290.5 444.5 L293.5 446.6" fill="none" stroke="#3b3a39" stroke-width="1" />
<rect x="268.5" y="437.5" width="22.0" height="7.0" fill="#fafafa" stroke="#3b3a39" stroke-width="1" rx="0" />
<path d="M268.5 451.5 L271.0 453.6 L303.5 453.6 L303.5 447.1 L300.5 444.5 Z" fill="#83bbec" stroke="#3b3a39" stroke-width="1" stroke-linejoin="round"/>
<path d="M300.5 451.5 L303.5 453.6" fill="none" stroke="#3b3a39" stroke-width="1" />
<rect x="268.5" y="444.5" width="32.0" height="7.0" fill="#83bbec" stroke="#3b3a39" stroke-width="1" rx="0" />
<path d="M268.5 463.5 L271.0 465.6 L299.5 465.6 L299.5 459.1 L296.5 456.5 Z" fill="#fafafa" stroke="#3b3a39" stroke-width="1" stroke-linejoin="round"/>
<path d="M296.5 463.5 L299.5 465.6" fill="none" stroke="#3b3a39" stroke-width="1" />
<rect x="268.5" y="456.5" width="28.0" height="7.0" fill="#fafafa" stroke="#3b3a39" stroke-width="1" rx="0" />
<path d="M268.5 470.5 L271.0 472.6 L294.5 472.6 L294.5 466.1 L291.5 463.5 Z" fill="#83bbec" stroke="#3b3a39" stroke-width="1" stroke-linejoin="round"/>
<path d="M291.5 470.5 L294.5 472.6" fill="none" stroke="#3b3a39" stroke-width="1" />
<rect x="268.5" y="463.5" width="23.0" height="7.0" fill="#83bbec" stroke="#3b3a39" stroke-width="1" rx="0" />
<path d="M332.5 436 L332.5 473.5 L368 473.5 M332.5 473.5 L326.5 479.5" fill="none" stroke="#3b3a39" stroke-width="1" />
<path d="M324.5 443.5 L327.5 440.8 L338.5 440.8 L335.5 443.5 Z" fill="#fafafa" stroke="#3b3a39" stroke-width="1" stroke-linejoin="round"/>
<rect x="324.5" y="443.5" width="11.0" height="10.0" fill="#fafafa" stroke="#3b3a39" stroke-width="1" rx="0" />
<path d="M350.5 443.5 L353.5 440.8 L353.5 450.8 L350.5 453.5 Z" fill="#83bbec" stroke="#1e73c8" stroke-width="1" stroke-linejoin="round"/>
<path d="M335.5 443.5 L338.5 440.8 L353.5 440.8 L350.5 443.5 Z" fill="#83bbec" stroke="#1e73c8" stroke-width="1" stroke-linejoin="round"/>
<rect x="335.5" y="443.5" width="15.0" height="10.0" fill="#83bbec" stroke="#1e73c8" stroke-width="1" rx="0" />
<path d="M324.5 459.5 L327.5 456.8 L346.5 456.8 L343.5 459.5 Z" fill="#fafafa" stroke="#3b3a39" stroke-width="1" stroke-linejoin="round"/>
<rect x="324.5" y="459.5" width="19.0" height="10.0" fill="#fafafa" stroke="#3b3a39" stroke-width="1" rx="0" />
<path d="M359.5 459.5 L362.5 456.8 L362.5 466.8 L359.5 469.5 Z" fill="#83bbec" stroke="#1e73c8" stroke-width="1" stroke-linejoin="round"/>
<path d="M343.5 459.5 L346.5 456.8 L362.5 456.8 L359.5 459.5 Z" fill="#83bbec" stroke="#1e73c8" stroke-width="1" stroke-linejoin="round"/>
<rect x="343.5" y="459.5" width="16.0" height="10.0" fill="#83bbec" stroke="#1e73c8" stroke-width="1" rx="0" />
<path d="M388.5 436 L388.5 473.5 L424 473.5 M388.5 473.5 L382.5 479.5" fill="none" stroke="#3b3a39" stroke-width="1" />
<path d="M380.5 443.5 L383.5 440.8 L393.5 440.8 L390.5 443.5 Z" fill="#fafafa" stroke="#3b3a39" stroke-width="1" stroke-linejoin="round"/>
<rect x="380.5" y="443.5" width="10.0" height="10.0" fill="#fafafa" stroke="#3b3a39" stroke-width="1" rx="0" />
<path d="M414.5 443.5 L417.5 440.8 L417.5 450.8 L414.5 453.5 Z" fill="#83bbec" stroke="#1e73c8" stroke-width="1" stroke-linejoin="round"/>
<path d="M390.5 443.5 L393.5 440.8 L417.5 440.8 L414.5 443.5 Z" fill="#83bbec" stroke="#1e73c8" stroke-width="1" stroke-linejoin="round"/>
<rect x="390.5" y="443.5" width="24.0" height="10.0" fill="#83bbec" stroke="#1e73c8" stroke-width="1" rx="0" />
<path d="M380.5 459.5 L383.5 456.8 L401.5 456.8 L398.5 459.5 Z" fill="#fafafa" stroke="#3b3a39" stroke-width="1" stroke-linejoin="round"/>
<rect x="380.5" y="459.5" width="18.0" height="10.0" fill="#fafafa" stroke="#3b3a39" stroke-width="1" rx="0" />
<path d="M414.5 459.5 L417.5 456.8 L417.5 466.8 L414.5 469.5 Z" fill="#83bbec" stroke="#1e73c8" stroke-width="1" stroke-linejoin="round"/>
<path d="M398.5 459.5 L401.5 456.8 L417.5 456.8 L414.5 459.5 Z" fill="#83bbec" stroke="#1e73c8" stroke-width="1" stroke-linejoin="round"/>
<rect x="398.5" y="459.5" width="16.0" height="10.0" fill="#83bbec" stroke="#1e73c8" stroke-width="1" rx="0" />
<path d="M274.5 503.5 L274.5 517.5 L290 517.5" fill="none" stroke="#3b3a39" stroke-width="1" />
<rect x="277" y="503.8" width="4.5" height="13.7" fill="#83bbec" stroke="#1e73c8" stroke-width="1" rx="0" />
<rect x="283" y="508.7" width="4.5" height="8.8" fill="#fff" stroke="#3b3a39" stroke-width="1" rx="0" />
</svg>
</body>
</html>
